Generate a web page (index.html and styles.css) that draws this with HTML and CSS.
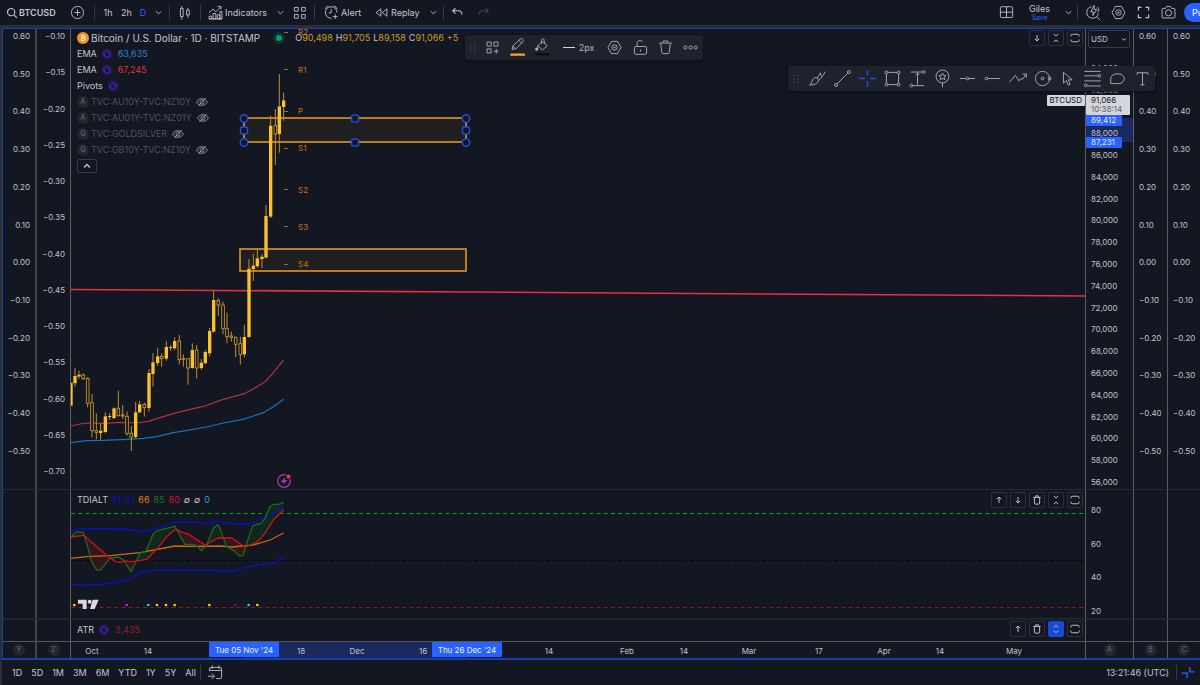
FILE: index.html
```html
<!DOCTYPE html>
<html lang="en">
<head>
<meta charset="utf-8">
<title>BTCUSD chart</title>
<link rel="stylesheet" href="styles.css">
</head>
<body>
<svg class="sprite" aria-hidden="true">
  <symbol id="search" viewBox="0 0 28 28"><circle cx="12" cy="12" r="8.500" stroke-width="2.600"/><path stroke-width="2.600" d="M18.500 18.500l7 7"/></symbol>
  <symbol id="plus" viewBox="0 0 28 28"><circle cx="14" cy="14" r="9"/><path d="M14 9.500v9M9.500 14h9"/></symbol>
  <symbol id="chev" viewBox="0 0 28 28"><path d="M10 12l4 4 4-4"/></symbol>
  <symbol id="candles" viewBox="0 0 28 28"><path d="M8 8h4v12H8zM10 4.500V8M10 20v4.500M17 10.500h4v7h-4zM19 7v3.500M19 17.500V22"/></symbol>
  <symbol id="indicators" viewBox="0 0 28 28"><path d="M4.500 23.500v-4h4v4zM10.500 23.500v-8h4v8zM16.500 23.500v-6h4v6zM20.500 23.500v-11h3v11zM4.500 23.500h19M4.500 14l6-5 4 4 7-7M17 5h5v4.500"/></symbol>
  <symbol id="grid" viewBox="0 0 28 28"><path d="M6.500 6.500h5.500v5.500H6.500zM17 6.500h5.500v5.500H17zM6.500 17h5.500v5.500H6.500zM17 17h5.500v5.500H17z"/></symbol>
  <symbol id="gridadd" viewBox="0 0 28 28"><path d="M6 6h6v6H6zM16 6h6v6h-6zM6 16h6v6H6zM19.500 16v7M16 19.500h7"/></symbol>
  <symbol id="alert" viewBox="0 0 28 28"><path d="M22 14a8.500 8.500 0 1 0-8 8.500M13.500 9v5.500H10M5 9c0-2 2-4 4.500-4.500M17.500 4.500C20 5 22 7 22 9M19.500 16.500v7M16 20h7"/></symbol>
  <symbol id="replay" viewBox="0 0 28 28"><path d="M13 8.500v11L6 14zM22 8.500v11L15 14z"/></symbol>
  <symbol id="undo" viewBox="0 0 28 28"><path stroke-width="1.600" d="M11 7.500l-4 4 4 4M7.500 11.500h8c3.500 0 5 2 5 5.500"/></symbol>
  <symbol id="redo" viewBox="0 0 28 28"><path stroke-width="1.600" d="M17 7.500l4 4-4 4M20.500 11.500h-8c-3.500 0-5 2-5 5.500"/></symbol>
  <symbol id="layout" viewBox="0 0 28 28"><rect x="5" y="5.500" width="18" height="16" rx="2"/><path d="M14 5.500v16M5 13.500h18"/></symbol>
  <symbol id="quick" viewBox="0 0 28 28"><path d="M11 5.500a8.500 8.500 0 1 0 10 10M18.500 20l5 5M15 3.500l-5 9.500h4l-1 5.500 6-9h-4zM20 6l2 5-2 3"/></symbol>
  <symbol id="settings" viewBox="0 0 28 28"><path d="M9.500 5h9l5 9-5 9h-9l-5-9z"/><circle cx="14" cy="14" r="4"/><circle cx="14" cy="14" r="1"/></symbol>
  <symbol id="full" viewBox="0 0 28 28"><path stroke-width="1.800" d="M6.500 11V6.500H11M17 6.500h4.500V11M21.500 17v4.500H17M11 21.500H6.500V17"/></symbol>
  <symbol id="camera" viewBox="0 0 28 28"><path d="M4.500 9.500c0-1 .5-1.500 1.500-1.500h3.500l2-3h5l2 3H22c1 0 1.500.5 1.500 1.500v11c0 1-.5 1.500-1.500 1.500H6c-1 0-1.500-.5-1.500-1.500z"/><circle cx="14" cy="14.500" r="4.500"/></symbol>
  <symbol id="drag" viewBox="0 0 28 28"><g class="solid"><circle cx="10" cy="8" r="1.300"/><circle cx="17" cy="8" r="1.300"/><circle cx="10" cy="14" r="1.300"/><circle cx="17" cy="14" r="1.300"/><circle cx="10" cy="20" r="1.300"/><circle cx="17" cy="20" r="1.300"/></g></symbol>
  <symbol id="pencil" viewBox="0 0 28 28"><path d="M6 17l1-5L18 1.500q1.500-1.500 3 0l1 1q1.500 1.500 0 3L11.500 16zM7 12l4.500 4M16 3.500l4 4"/><path stroke="#ffa726" stroke-width="3.500" stroke-linecap="round" d="M5 24.500h18.500"/></symbol>
  <symbol id="bucket" viewBox="0 0 28 28"><path d="M14 4.500l7 7-7 6-7-6zM12.500 9V3.500c0-3 4-3 4 0V9M7.500 11.500l-3 5"/><circle class="solid" cx="5.500" cy="16.500" r="2.200"/><path stroke="#080807" stroke-width="2.500" d="M4 24.500l2-1 2 1 2-1 2 1 2-1 2 1 2-1 2 1 2-1 2 1"/></symbol>
  <symbol id="lock" viewBox="0 0 28 28"><rect x="5" y="12.500" width="18" height="11.500" rx="2"/><path d="M9 12V8c0-4.500 6-6 8-2M14 17v3"/></symbol>
  <symbol id="trash" viewBox="0 0 28 28"><path d="M4.500 7.500h19M10.500 7V4.500h7V7M7 8l1.500 13.500c.1 1 .8 1.500 1.700 1.500h7.600c.9 0 1.600-.5 1.700-1.500L21 8"/></symbol>
  <symbol id="more" viewBox="0 0 28 28"><circle cx="6.500" cy="14" r="2.300"/><circle cx="14" cy="14" r="2.300"/><circle cx="21.500" cy="14" r="2.300"/></symbol>
  <symbol id="brush" viewBox="0 0 28 28"><path d="M2.500 23.500c4-2 2.500-7.500 7-10.500 3.500-1 7 2 5.500 5.500-1.500 4-8 5.500-12.500 5zM13.500 14c2-4 3-6 5-8M15.500 17c4-3 7-8 10-13M18 5c0 3 1 5 3 6"/></symbol>
  <symbol id="line" viewBox="0 0 28 28"><circle cx="4.500" cy="23.500" r="2.200"/><circle cx="23.500" cy="4.500" r="2.200"/><path d="M6 22L22 6"/></symbol>
  <symbol id="cross" viewBox="0 0 28 28"><path stroke-width="2" d="M14 2v8M14 18v8M2 14h8M18 14h8"/></symbol>
  <symbol id="rect" viewBox="0 0 28 28"><circle cx="5" cy="5" r="2"/><circle cx="23" cy="5" r="2"/><circle cx="5" cy="23" r="2"/><circle cx="23" cy="23" r="2"/><path d="M7 5h14M7 23h14M5 7v14M23 7v14"/></symbol>
  <symbol id="measure" viewBox="0 0 28 28"><path d="M4 4.500h17M7 24.500h17M14 6v17M11 9l3-3 3 3"/><circle cx="23" cy="4.500" r="2"/><circle cx="5" cy="24.500" r="2"/></symbol>
  <symbol id="pin" viewBox="0 0 28 28"><circle cx="14" cy="11" r="9.500"/><path d="M14 20.500V27M14 6l1.600 3.400 3.600.4-2.700 2.400.8 3.600-3.300-1.900-3.300 1.900.8-3.600-2.700-2.400 3.600-.4z"/></symbol>
  <symbol id="hline" viewBox="0 0 28 28"><circle cx="14" cy="14" r="2"/><path d="M3 14h9M16 14h9"/></symbol>
  <symbol id="hray" viewBox="0 0 28 28"><circle cx="5" cy="14" r="2"/><path d="M7 14h18"/></symbol>
  <symbol id="zigzag" viewBox="0 0 28 28"><path d="M2 19.500l9-10 5 8 3-4 2 2 6-8M21.500 7.500H27V13"/></symbol>
  <symbol id="circle" viewBox="0 0 28 28"><circle cx="14" cy="14" r="10.500"/><circle cx="14" cy="14" r="2"/><circle cx="24.500" cy="14" r="2"/></symbol>
  <symbol id="cursor" viewBox="0 0 28 28"><path d="M8 5v16l4-4 3 7 3-1.500-3-6.500h6z"/></symbol>
  <symbol id="fib" viewBox="0 0 28 28"><path d="M2 3.500h24M2 10h20M2 17.500h24M6 25h20"/><circle cx="24" cy="10" r="2"/><circle cx="4" cy="24" r="2"/></symbol>
  <symbol id="blob" viewBox="0 0 28 28"><path d="M4 21.500V14C4 5 24 4.500 24 14c0 4.500-3.500 7.500-8 7.500z"/></symbol>
  <symbol id="text" viewBox="0 0 28 28"><path d="M6 8.500V5.500h16v3M14 5.500v18M11 23.500h6"/></symbol>
  <symbol id="down" viewBox="0 0 16 16"><path d="M8 4v8M5 9l3 3 3-3"/></symbol>
  <symbol id="up" viewBox="0 0 16 16"><path d="M8 12V4M5 7l3-3 3 3"/></symbol>
  <symbol id="collapse" viewBox="0 0 16 16"><path d="M5 2.500l3 3 3-3M5 13.500l3-3 3 3"/></symbol>
  <symbol id="expand" viewBox="0 0 16 16"><path d="M5 6l3-3 3 3M5 10l3 3 3-3"/></symbol>
  <symbol id="max" viewBox="0 0 16 16"><path d="M2.500 6V5q0-2 2-2h7q2 0 2 2v1M2.500 10v1q0 2 2 2h7q2 0 2-2v-1"/></symbol>
  <symbol id="bin" viewBox="0 0 16 16"><path d="M3 4.500h10M6 4.500V2.500h4v2M4.500 4.500V12q0 1.500 1.500 1.500h4q1.500 0 1.500-1.500V4.500"/></symbol>
  <symbol id="sync" viewBox="0 0 16 16"><path d="M3.500 10.500a5 5 0 0 1 8.500-5.500M12.500 5.500a5 5 0 0 1-8.500 5.500M1.500 8.500l2 2 2-2M10.500 7.500l2-2 2 2"/></symbol>
  <symbol id="eye" viewBox="0 0 20 16"><path d="M1 8c4-7.500 14-7.500 18 0-4 7.500-14 7.500-18 0zM4 14.500L16 1.500"/><circle cx="10" cy="8" r="3.500"/></symbol>
  <symbol id="goto" viewBox="0 0 28 28"><path d="M5 12V9q0-2.500 2.500-2.500h13Q23 6.500 23 9v11.500Q23 23 20.500 23H15M5 11h18M9 3.500v5M19 3.500v5M3 19.500h9M8.500 15.500l4 4-4 4"/></symbol>
  <symbol id="shrink" viewBox="0 0 28 28"><path stroke-width="2" d="M4 15h8v7M16 6v7h7"/></symbol>
</svg>

<header class="topbar">
  <nav class="top-left">
    <button class="symbol"><svg class="ic-s"><use href="#search"/></svg>BTCUSD</button>
    <button aria-label="Compare"><svg class="ic"><use href="#plus"/></svg></button>
    <i class="sep"></i>
    <button>1h</button>
    <button>2h</button>
    <button class="active">D</button>
    <button aria-label="Intervals"><svg class="ic"><use href="#chev"/></svg></button>
    <i class="sep"></i>
    <button aria-label="Chart type"><svg class="ic"><use href="#candles"/></svg></button>
    <i class="sep"></i>
    <button class="lead"><svg class="ic"><use href="#indicators"/></svg>Indicators</button>
    <button aria-label="Favorites"><svg class="ic"><use href="#chev"/></svg></button>
    <button aria-label="Templates"><svg class="ic"><use href="#grid"/></svg></button>
    <i class="sep"></i>
    <button class="lead wide"><svg class="ic"><use href="#alert"/></svg>Alert</button>
    <button class="lead wide"><svg class="ic"><use href="#replay"/></svg>Replay</button>
    <button aria-label="Replay options"><svg class="ic"><use href="#chev"/></svg></button>
    <i class="sep"></i>
    <button aria-label="Undo"><svg class="ic"><use href="#undo"/></svg></button>
    <button class="off" aria-label="Redo"><svg class="ic"><use href="#redo"/></svg></button>
  </nav>
  <nav class="top-right">
    <button aria-label="Layout"><svg class="ic"><use href="#layout"/></svg></button>
    <button class="save"><span>Giles</span><small>Save</small></button>
    <button aria-label="Manage layouts"><svg class="ic"><use href="#chev"/></svg></button>
    <i class="sep"></i>
    <button aria-label="Quick search"><svg class="ic"><use href="#quick"/></svg></button>
    <button aria-label="Settings"><svg class="ic"><use href="#settings"/></svg></button>
    <button aria-label="Fullscreen"><svg class="ic"><use href="#full"/></svg></button>
    <button aria-label="Snapshot"><svg class="ic"><use href="#camera"/></svg></button>
    <button class="publish">Publish</button>
  </nav>
</header>

<main class="board">
  <div class="scale s-y main-row steps-a"><span>0.60</span><span>0.50</span><span>0.40</span><span>0.30</span><span>0.20</span><span>0.10</span><span>0.00</span><span>−0.10</span><span>−0.20</span><span>−0.30</span><span>−0.40</span><span>−0.50</span></div>
  <div class="scale s-z main-row steps-b"><span>−0.10</span><span>−0.15</span><span>−0.20</span><span>−0.25</span><span>−0.30</span><span>−0.35</span><span>−0.40</span><span>−0.45</span><span>−0.50</span><span>−0.55</span><span>−0.60</span><span>−0.65</span><span>−0.70</span></div>

  <section class="pane main-row">
    <svg class="canvas" aria-label="Price chart">
      <g class="zone">
        <rect x="169" y="220" width="226" height="22"/>
        <rect x="173" y="89" width="222" height="24"/>
      </g>
      <line x1="0" y1="260.500" x2="100%" y2="267" stroke="#e8313f" stroke-width="1.600"/>
      <g transform="translate(-11 211) scale(.33333)">
        <polyline class="ema" stroke="#b03532" points="33,558 60,552 80,549 130,550 180,547 230,549 265,544 300,533 350,518 400,506 435,498 480,481 520,470 553,461 585,444 615,425 640,398 671,360"/>
        <polyline class="ema" stroke="#1d70b8" points="33,608 80,602 130,601 200,598 250,595 290,590 340,578 400,568 440,561 490,549 550,538 580,528 610,518 640,500 671,478"/>
        <g id="candles-layer"></g>
      </g>
      <g class="pivots">
        <path d="M213 3.500h4M213 40.500h4M213 82.500h4M213 119.500h4M213 160.500h4M213 197.500h4M213 235.500h4"/>
        <text x="227" y="6">R2</text><text x="227" y="44">R1</text><text x="227" y="85">P</text><text x="227" y="122">S1</text><text x="227" y="164">S2</text><text x="227" y="201">S3</text><text x="227" y="238">S4</text>
      </g>
      <g class="handles">
        <circle cx="173" cy="89.500" r="3.700"/><circle cx="395" cy="89.500" r="3.700"/><circle cx="173" cy="113.500" r="3.700"/><circle cx="395" cy="113.500" r="3.700"/>
        <rect x="280.500" y="86" width="7" height="7" rx="2"/><rect x="280.500" y="110" width="7" height="7" rx="2"/><rect x="169.500" y="98" width="7" height="7" rx="2"/><rect x="391.500" y="98" width="7" height="7" rx="2"/>
      </g>
      <g transform="translate(213 452)" stroke="#9c3bb0" stroke-width="1.300"><circle r="6.300"/><path fill="#9c3bb0" stroke="none" d="M1.500-4L-3.500 1h3L-1.500 4 3.500-1h-3z"/><circle cx="4.500" cy="-4.500" r="2.500" fill="#f23645" stroke="#131722" stroke-width="1"/></g>
    </svg>
    <div class="legend">
      <div class="title"><svg class="coin" viewBox="0 0 24 24"><circle cx="12" cy="12" r="12" fill="#f7931a" stroke="none"/><path d="M9 7.500h4.500q2.500 0 2.500 2.200T13.500 12H9.500M13.500 12q3 0 3 2.300T13.500 16.700H8M10.500 7.500L9 16.700M12.500 5v2M11 17v2" fill="none" stroke="#fff" stroke-width="2"/></svg><h1>Bitcoin / U.S. Dollar · 1D · BITSTAMP</h1><i class="live"></i><span class="ohlc">O<b>90,498</b></span><span class="ohlc">H<b>91,705</b></span><span class="ohlc">L<b>89,158</b></span><span class="ohlc">C<b>91,066</b></span><span class="ohlc"><b>+5</b></span></div>
      <div class="row">EMA<svg class="sync"><use href="#sync"/></svg><span class="c-blue">63,635</span></div>
      <div class="row">EMA<svg class="sync"><use href="#sync"/></svg><span class="c-red">67,245</span></div>
      <div class="row">Pivots<svg class="sync"><use href="#sync"/></svg></div>
      <div class="row dim"><i class="dot">A</i>TVC:AU10Y-TVC:NZ10Y<svg class="eye"><use href="#eye"/></svg></div>
      <div class="row dim"><i class="dot">A</i>TVC:AU01Y-TVC:NZ01Y<svg class="eye"><use href="#eye"/></svg></div>
      <div class="row dim"><i class="dot">G</i>TVC:GOLDSILVER<svg class="eye"><use href="#eye"/></svg></div>
      <div class="row dim"><i class="dot">G</i>TVC:GB10Y-TVC:NZ10Y<svg class="eye"><use href="#eye"/></svg></div>
      <button class="fold" aria-label="Collapse legend"><svg viewBox="0 0 12 8"><path d="M3 5.500l3-3 3 3"/></svg></button>
    </div>
    <div class="tools">
      <button aria-label="Move pane down"><svg><use href="#down"/></svg></button>
      <button aria-label="Collapse pane"><svg><use href="#collapse"/></svg></button>
      <button aria-label="Maximize pane"><svg><use href="#max"/></svg></button>
    </div>
    <span class="name-tag">BTCUSD</span>
  </section>

  <div class="scale s-p main-row">
    <label class="currency"><select aria-label="Currency"><option>USD</option></select><svg viewBox="0 0 8 6"><path d="M1.500 1.500L4 4l2.500-2.500"/></svg></label>
    <i class="band"></i>
    <div class="prices"><span>94,000</span><span>92,000</span><span class="blank"></span><span>88,000</span><span>86,000</span><span>84,000</span><span>82,000</span><span>80,000</span><span>78,000</span><span>76,000</span><span>74,000</span><span>72,000</span><span>70,000</span><span>68,000</span><span>66,000</span><span>64,000</span><span>62,000</span><span>60,000</span><span>58,000</span><span>56,000</span></div>
    <div class="last">91,066<em>10:38:14</em></div>
    <div class="level hi">89,412</div>
    <div class="level lo">87,231</div>
  </div>
  <div class="scale s-a main-row steps-a"><span>0.60</span><span>0.50</span><span>0.40</span><span>0.30</span><span>0.20</span><span>0.10</span><span>0.00</span><span>−0.10</span><span>−0.20</span><span>−0.30</span><span>−0.40</span><span>−0.50</span></div>
  <div class="scale s-a main-row steps-a"><span>0.60</span><span>0.50</span><span>0.40</span><span>0.30</span><span>0.20</span><span>0.10</span><span>0.00</span><span>−0.10</span><span>−0.20</span><span>−0.30</span><span>−0.40</span><span>−0.50</span></div>

  <div class="scale s-y sub"></div>
  <div class="scale s-z sub"></div>
  <section class="pane sub">
    <svg class="canvas" aria-label="TDIALT">
      <line class="dash" x1="0" y1="23.500" x2="100%" y2="23.500" stroke="#0ea51c"/>
      <line class="dash" x1="0" y1="70.500" x2="100%" y2="70.500" stroke="#07080c"/>
      <line class="dash" x1="0" y1="117.500" x2="100%" y2="117.500" stroke="#a80f1b"/>
      <g transform="translate(-11 -25) scale(.33333)">
        <path fill="#11271f" d="M33 216L55 200 70 203 72 211zM213 320L240 265 258 258 280 206 292 197 345 184 345 193 320 215 290 253 260 283 225 290zM440 240L460 190 473 179 490 219 475 219zM557 246L578 182 605 174 630 125 640 118 671 113 671 134 640 165 615 205 590 232z"/>
        <path fill="#35151f" d="M72 211L95 290 110 315 122 314 150 280 140 271 95 232zM180 293L190 285 213 320 225 290zM348 193L375 238 400 238 425 257 438 240 405 221 385 207zM490 219L500 245 520 256 540 273 550 270 556 246 515 219z"/>
        <g class="tdi">
          <polyline stroke="#0d0dd0" points="33,202 50,194 75,191 200,192 230,198 250,199 290,190 345,171 380,170 430,175 455,174 475,169 520,175 560,177 580,173 600,164 640,145 671,128"/>
          <polyline stroke="#0d0dd0" points="33,358 65,361 80,358 120,359 150,355 205,345 240,323 270,317 340,314 400,315 520,318 550,308 600,299 640,295 655,284 671,282"/>
          <polyline stroke="#c96b0c" points="33,280 80,275 150,272 240,263 345,243 400,244 480,243 515,246 580,240 630,225 671,204"/>
          <polyline stroke="#167018" points="33,216 45,204 55,200 70,203 80,235 95,290 110,315 122,314 150,280 175,276 190,285 200,300 213,320 240,265 258,258 280,206 292,197 345,184 375,238 400,238 412,244 425,257 440,240 460,190 473,179 480,190 500,245 520,256 540,273 550,270 565,220 578,182 605,174 615,160 630,125 640,118 655,118 671,113"/>
          <polyline stroke="#d01414" points="33,216 72,211 95,232 140,271 165,289 180,293 190,288 215,290 260,283 290,253 320,215 345,193 370,203 385,207 405,221 435,240 475,219 515,219 555,246 590,232 615,205 640,165 671,134"/>
        </g>
        <g fill="#f5d90a"><circle cx="43" cy="420" r="4"/><circle cx="291" cy="420" r="4"/><circle cx="318" cy="420" r="4"/><circle cx="344" cy="420" r="4"/><circle cx="448" cy="420" r="4"/><circle cx="592" cy="420" r="4"/></g>
        <g fill="#12e4ee"><circle cx="265" cy="420" r="4"/><circle cx="566" cy="420" r="4"/></g>
        <circle cx="200" cy="420" r="4" fill="#f00cf0"/><circle cx="526" cy="420" r="4" fill="#7a0a7c"/>
        <path fill="#d8dae2" stroke="#131722" stroke-width="5" paint-order="stroke" d="M54 404H80V432H68V416H54zM98 404H116L104 432H90z"/><circle cx="89" cy="410" r="6" fill="#d8dae2"/>
      </g>
    </svg>
    <div class="legend"><div class="row values"><span>TDIALT</span><span class="navy">81</span><span class="navy">51</span><span class="c-orange">66</span><span class="c-green">85</span><span class="c-crimson">80</span><span>∅</span><span>∅</span><span class="c-cyan">0</span></div></div>
    <div class="tools">
      <button aria-label="Move pane up"><svg><use href="#up"/></svg></button>
      <button aria-label="Move pane down"><svg><use href="#down"/></svg></button>
      <button aria-label="Delete pane"><svg><use href="#bin"/></svg></button>
      <button aria-label="Collapse pane"><svg><use href="#collapse"/></svg></button>
      <button aria-label="Maximize pane"><svg><use href="#max"/></svg></button>
    </div>
  </section>
  <div class="scale s-p sub steps-c"><span>80</span><span>60</span><span>40</span><span>20</span></div>
  <div class="scale s-a sub"></div>
  <div class="scale s-a sub"></div>

  <div class="scale s-y sub thick"></div>
  <div class="scale s-z sub thick"></div>
  <section class="pane sub thick">
    <div class="legend"><div class="row">ATR<svg class="sync"><use href="#sync"/></svg><span class="c-dark">3,435</span></div></div>
    <div class="tools">
      <button aria-label="Move pane up"><svg><use href="#up"/></svg></button>
      <button aria-label="Delete pane"><svg><use href="#bin"/></svg></button>
      <button class="on" aria-label="Expand pane"><svg><use href="#expand"/></svg></button>
      <button aria-label="Maximize pane"><svg><use href="#max"/></svg></button>
    </div>
  </section>
  <div class="scale s-p sub thick"></div>
  <div class="scale s-a sub thick"></div>
  <div class="scale s-a sub thick"></div>

  <div class="scale s-y foot"><button class="dot">Y</button></div>
  <div class="scale s-z foot"><button class="dot">Z</button></div>
  <div class="pane foot">
    <svg class="canvas times" aria-label="Time axis">
      <rect x="173" y="0" width="222" height="16" fill="#1a2a5e"/>
      <text x="21" y="12">Oct</text><text x="77" y="12">14</text><text x="230" y="12">18</text><text x="286" y="12">Dec</text><text x="352" y="12">16</text><text x="429" y="12">6</text><text x="478" y="12">14</text><text x="556" y="12">Feb</text><text x="613" y="12">14</text><text x="678" y="12">Mar</text><text x="748" y="12">17</text><text x="813" y="12">Apr</text><text x="869" y="12">14</text><text x="943" y="12">May</text>
      <rect x="138" y="0" width="70" height="15" rx="1" fill="#2962ff"/><rect x="361" y="0" width="70" height="15" rx="1" fill="#2962ff"/>
      <text class="lit" x="173" y="11">Tue 05 Nov '24</text><text class="lit" x="396" y="11">Thu 26 Dec '24</text>
    </svg>
  </div>
  <div class="scale s-p foot"><button class="dot">A</button></div>
  <div class="scale s-a foot"><button class="dot">B</button></div>
  <div class="scale s-a foot"><button class="dot">C</button></div>

  <div class="float edit" role="toolbar" aria-label="Drawing settings">
    <svg class="grip"><use href="#drag"/></svg>
    <button aria-label="Template"><svg class="ic"><use href="#gridadd"/></svg></button>
    <button aria-label="Line color"><svg class="ic"><use href="#pencil"/></svg></button>
    <button aria-label="Fill color"><svg class="ic"><use href="#bucket"/></svg></button>
    <button class="weight"><i></i>2px</button>
    <button aria-label="Settings"><svg class="ic"><use href="#settings"/></svg></button>
    <button aria-label="Lock"><svg class="ic"><use href="#lock"/></svg></button>
    <button aria-label="Remove"><svg class="ic"><use href="#trash"/></svg></button>
    <button aria-label="More"><svg class="ic"><use href="#more"/></svg></button>
  </div>
  <div class="float draw" role="toolbar" aria-label="Favorite tools">
    <svg class="grip"><use href="#drag"/></svg>
    <button aria-label="Brush"><svg class="ic"><use href="#brush"/></svg></button>
    <button aria-label="Trend line"><svg class="ic"><use href="#line"/></svg></button>
    <button class="active" aria-label="Cross"><svg class="ic"><use href="#cross"/></svg></button>
    <button aria-label="Rectangle"><svg class="ic"><use href="#rect"/></svg></button>
    <button aria-label="Price range"><svg class="ic"><use href="#measure"/></svg></button>
    <button aria-label="Pin"><svg class="ic"><use href="#pin"/></svg></button>
    <button aria-label="Horizontal line"><svg class="ic"><use href="#hline"/></svg></button>
    <button aria-label="Horizontal ray"><svg class="ic"><use href="#hray"/></svg></button>
    <button aria-label="Path"><svg class="ic"><use href="#zigzag"/></svg></button>
    <button aria-label="Circle"><svg class="ic"><use href="#circle"/></svg></button>
    <button aria-label="Arrow"><svg class="ic"><use href="#cursor"/></svg></button>
    <button aria-label="Fib retracement"><svg class="ic"><use href="#fib"/></svg></button>
    <button aria-label="Callout"><svg class="ic"><use href="#blob"/></svg></button>
    <button aria-label="Text"><svg class="ic"><use href="#text"/></svg></button>
  </div>
</main>

<footer class="bottom">
  <nav class="ranges"><button>1D</button><button>5D</button><button>1M</button><button>3M</button><button>6M</button><button>YTD</button><button>1Y</button><button>5Y</button><button>All</button></nav>
  <i class="sep"></i>
  <button aria-label="Go to date"><svg class="ic"><use href="#goto"/></svg></button>
  <button class="clock">13:21:46 (UTC)</button>
  <i class="sep"></i>
  <button class="active" aria-label="Restore"><svg class="ic"><use href="#shrink"/></svg></button>
</footer>
<script src="chart.js"></script>
</body>
</html>
```

FILE: chart.js
```js
// Each candle: centre x, high, low, body top, body bottom, filled (1) or hollow (0)
const candles = [
  [33,428,497,428,497,1],[45,384,440,408,430,1],[57,392,416,404,410,1],[70,400,420,405,416,0],
  [83,412,502,415,490,0],[96,462,592,488,572,0],[109,520,598,572,577,0],[122,550,600,572,579,1],
  [136,517,580,529,576,1],[149,520,540,528,531,1],[162,502,535,505,535,1],[175,452,530,505,527,0],
  [188,495,537,525,528,0],[201,515,587,529,580,0],[214,558,633,580,591,0],[227,486,595,517,591,1],
  [239,483,520,493,517,1],[253,488,530,493,503,0],[267,387,515,399,504,1],[279,340,440,367,402,1],
  [293,323,378,349,369,1],[305,340,380,349,356,0],[319,304,362,321,356,1],[332,315,332,321,324,1],
  [344,292,330,303,325,1],[358,285,373,303,359,0],[370,343,380,356,358,0],[384,355,434,356,384,0],
  [397,310,386,330,384,1],[410,315,416,330,384,0],[424,357,390,368,384,1],[436,330,372,336,370,1],
  [449,264,350,273,340,1],[461,153,278,180,275,1],[475,175,228,181,195,0],[489,185,283,195,265,0],
  [501,218,310,265,290,0],[514,275,305,288,292,0],[527,290,352,292,313,0],[541,290,374,311,343,0],
  [553,254,352,291,343,1],[567,57,293,86,291,1],[580,42,123,77,87,1],[592,30,83,55,79,1],
  [606,43,84,50,57,1],[618,-105,55,-72,53,1],[632,-373,-66,-343,-70,1],[646,-393,-225,-343,-318,0],
  [658,-498,-262,-401,-318,1],[671,-442,-358,-419,-399,1]
];
const ns = "http://www.w3.org/2000/svg";
const layer = document.getElementById("candles-layer");
function add(name, attrs) {
  const el = document.createElementNS(ns, name);
  for (const key in attrs) el.setAttribute(key, attrs[key]);
  layer.appendChild(el);
}
for (const [x, high, low, top, bottom, filled] of candles) {
  add("path", { class: "wick", d: `M${x} ${high}V${top}M${x} ${bottom}V${low}` });
  if (filled) add("rect", { class: "up", x: x - 5, y: top, width: 10, height: Math.max(bottom - top, 3) });
  else add("rect", { class: "down", x: x - 4, y: top, width: 8, height: Math.max(bottom - top, 2) });
}
```

FILE: styles.css
```css
* { box-sizing: border-box; }
body {
  margin: 0;
  height: 100vh;
  min-height: 600px;
  display: flex;
  flex-direction: column;
  overflow: hidden;
  background: #2b2e38;
  color: #c3c5cd;
  font: 9px/14px Inter, "Liberation Sans", sans-serif;
}
button, select { font: inherit; color: inherit; background: none; border: 0; padding: 0; margin: 0; }
button { display: flex; align-items: center; justify-content: center; white-space: nowrap; }
svg { fill: none; stroke: currentColor; stroke-width: 1.3; }
i, em { font-style: normal; }
.solid { fill: currentColor; stroke: none; }
.sprite { position: absolute; width: 0; height: 0; }
.ic { width: 19px; height: 19px; flex: none; }
.ic-s { width: 12px; height: 12px; flex: none; }
.sep { width: 1px; height: 15px; background: #363a45; justify-self: center; }
.active { color: #2962ff; }
.off { color: #434651; }

.topbar { flex: none; height: 25px; display: flex; justify-content: space-between; overflow: hidden; background: #131722; }
.top-left, .top-right { display: grid; align-items: center; }
.top-left { grid-template-columns: 65px 25px 8px 20px 17px 16px 15px 6px 24px 8px 68px 16px 22px 8px 50px 57px 16px 4px 25px 26px; }
.top-right { grid-template-columns: 22px 45px 12px 7px 24px 26px 25px 24px 20px; }
.symbol { font-weight: 600; gap: 1px; justify-content: flex-start; padding-left: 6px; }
.lead { justify-content: flex-start; padding-left: 2px; }
.lead.wide { padding-left: 4px; }
.save { flex-direction: column; line-height: 10px; }
.save small { font-size: 7px; line-height: 8px; color: #2962ff; }
.publish { width: 52px; height: 19px; margin-left: 4px; padding-left: 8px; justify-content: flex-start; border-radius: 10px; background: #2962ff; color: #fff; }

.board {
  position: relative;
  flex: 1;
  min-height: 0;
  margin: 3px 0 0 2px;
  display: grid;
  grid-template-columns: 34px 34px minmax(0, 1fr) 48px 34px 33px;
  grid-template-rows: minmax(0, 1fr) 129px 23px 17px;
  background: #131722;
  border: 1px solid #173cb4;
  border-width: 1px 0 2px 1px;
}
.scale { position: relative; display: flex; flex-direction: column; justify-content: space-between; font-size: 8px; line-height: 14px; color: #c0c2c9; }
.s-y { border-right: 2px solid #434549; text-align: right; padding-right: 5px; }
.s-z { border-right: 1px solid #5c5e63; text-align: right; padding-right: 5px; }
.s-p, .s-a { border-left: 1px solid #5c5e63; padding-left: 5px; }
.steps-a { padding-bottom: 31px; }
.steps-b { padding-bottom: 11px; }
.steps-c { padding-top: 13px; }
.sub { border-top: 1px solid #262a34; }
.thick { border-top: 2px solid #1f232d; }
.foot { border-top: 1px solid #55575c; }
.scale.foot { padding: 0; align-items: center; justify-content: center; }
.dot { width: 12px; height: 12px; border-radius: 50%; background: #242730; color: #6d707a; font-size: 7px; line-height: 12px; text-align: center; }

.pane { position: relative; min-width: 0; overflow: hidden; }
.canvas { position: absolute; inset: 0; width: 100%; height: 100%; stroke: none; }
.canvas text { stroke: none; }
.zone rect { fill: #1f1f22; stroke: #e8941f; stroke-width: 1.600; }
.ema { stroke-width: 1.200; vector-effect: non-scaling-stroke; }
.wick { stroke: #c0902a; stroke-width: 3; }
.up { fill: #fcc02c; }
.down { fill: #131722; stroke: #cf9c2b; stroke-width: 2.500; }
.pivots { stroke: #b56407; stroke-width: 1; }
.pivots text { fill: #c9720c; font-size: 8px; }
.handles { fill: #131722; stroke: #1d4fd7; stroke-width: 1.500; }
.dash { stroke-width: 1; stroke-dasharray: 4 3.200; }
.tdi polyline { stroke-width: 1.300; vector-effect: non-scaling-stroke; }
.times text { fill: #c0c2c9; font-size: 8px; text-anchor: middle; }
.times .lit { fill: #eef1ff; }

.legend { position: relative; padding: 1px 0 0 6px; }
.title, .row { display: flex; align-items: center; height: 16px; white-space: nowrap; }
.title h1 { margin: 0 0 0 2px; font-size: 10px; font-weight: 400; }
.coin { width: 12px; height: 12px; }
.live { width: 6px; height: 6px; margin: 0 13px 0 16px; border-radius: 50%; background: #089981; box-shadow: 0 0 0 3px #10312f; }
.ohlc { margin-right: 3px; }
.ohlc b { font-weight: 400; color: #c99b2b; }
.row { font-size: 9px; }
.sync { width: 12px; height: 12px; padding: 1px; margin: 0 5px 0 4px; color: #7125ee; border-radius: 50%; background: #1c1740; }
.dim { color: #50535e; }
.dim .dot { margin-right: 2px; }
.eye { width: 12px; height: 10px; margin-left: 5px; color: #aaadb6; }
.fold { width: 20px; height: 14px; border: 1px solid #363a45; border-radius: 2px; margin-top: 1px; }
.fold svg { width: 12px; height: 8px; }
.values { gap: 4px; height: 18px; }
.thick .legend { padding-top: 2px; }
.c-blue { color: #2185d8; }
.c-red { color: #db3a3a; }
.navy { color: #0d0dc0; }
.c-orange { color: #e08010; }
.c-green { color: #187a1b; }
.c-crimson { color: #cc1522; }
.c-cyan { color: #2f9cc8; }
.c-dark { color: #94202a; }

.tools { position: absolute; top: 1px; right: 2px; display: flex; gap: 3px; }
.sub .tools { top: 2px; }
.thick .tools { top: 1px; }
.tools button { width: 16px; height: 16px; border: 1px solid #2c303b; border-radius: 2px; background: #131722; }
.tools svg { width: 12px; height: 12px; flex: none; }
.tools .on { background: #1848d8; border-color: #1848d8; }

.name-tag { position: absolute; top: 66px; right: 0; padding: 0 3px; background: #d5d6dc; color: #131722; font-size: 8px; line-height: 11px; border-radius: 1px; }
.currency { position: absolute; top: 1px; left: 2px; width: 42px; height: 18px; border: 1px solid #363a45; border-radius: 2px; }
.currency select { width: 100%; height: 100%; padding-left: 2px; appearance: none; font-size: 8px; }
.currency svg { position: absolute; right: 2px; top: 6px; width: 6px; height: 5px; }
.band { position: absolute; top: 89px; left: 0; right: 0; height: 24px; background: #1a2a5e; }
.prices { position: relative; flex: 1; padding-top: 32px; display: flex; flex-direction: column; justify-content: space-between; }
.blank { height: 14px; }
.last, .level { position: absolute; left: 0; padding-left: 5px; border-radius: 1px; }
.last { top: 66px; width: 44px; height: 20px; line-height: 10px; background: #d5d6dc; color: #131722; }
.last em { display: block; line-height: 9px; color: #5b5d66; }
.level { width: 36px; line-height: 11px; background: #2962ff; color: #e6ecff; }
.hi { top: 86px; }
.lo { top: 108px; }

.float { position: absolute; display: grid; align-items: center; height: 25px; border-radius: 3px; background: #1e222d; box-shadow: 0 1px 3px #0b0e15; color: #b2b5be; }
.edit { left: 462px; top: 6px; grid-template-columns: 15px 25px 25px 25px 47px 25px 26px 25px 25px; }
.draw { right: 45px; top: 37px; grid-template-columns: 17px repeat(14, 25px); }
.grip { width: 16px; height: 16px; color: #4a4e59; }
.float .active { color: #1f55e0; }
.weight { gap: 4px; }
.weight i { width: 12px; height: 1px; background: #d1d4dc; }

.bottom { flex: none; height: 25px; margin-left: 2px; padding: 0 2px 0 10px; display: flex; align-items: center; background: #131722; }
.ranges { display: flex; gap: 9px; margin-right: 4px; }
.bottom .sep + button { margin-left: 5px; }
.bottom .sep + .active { margin-left: 2px; }
.bottom .clock { margin-left: auto; margin-right: 7px; }
```
